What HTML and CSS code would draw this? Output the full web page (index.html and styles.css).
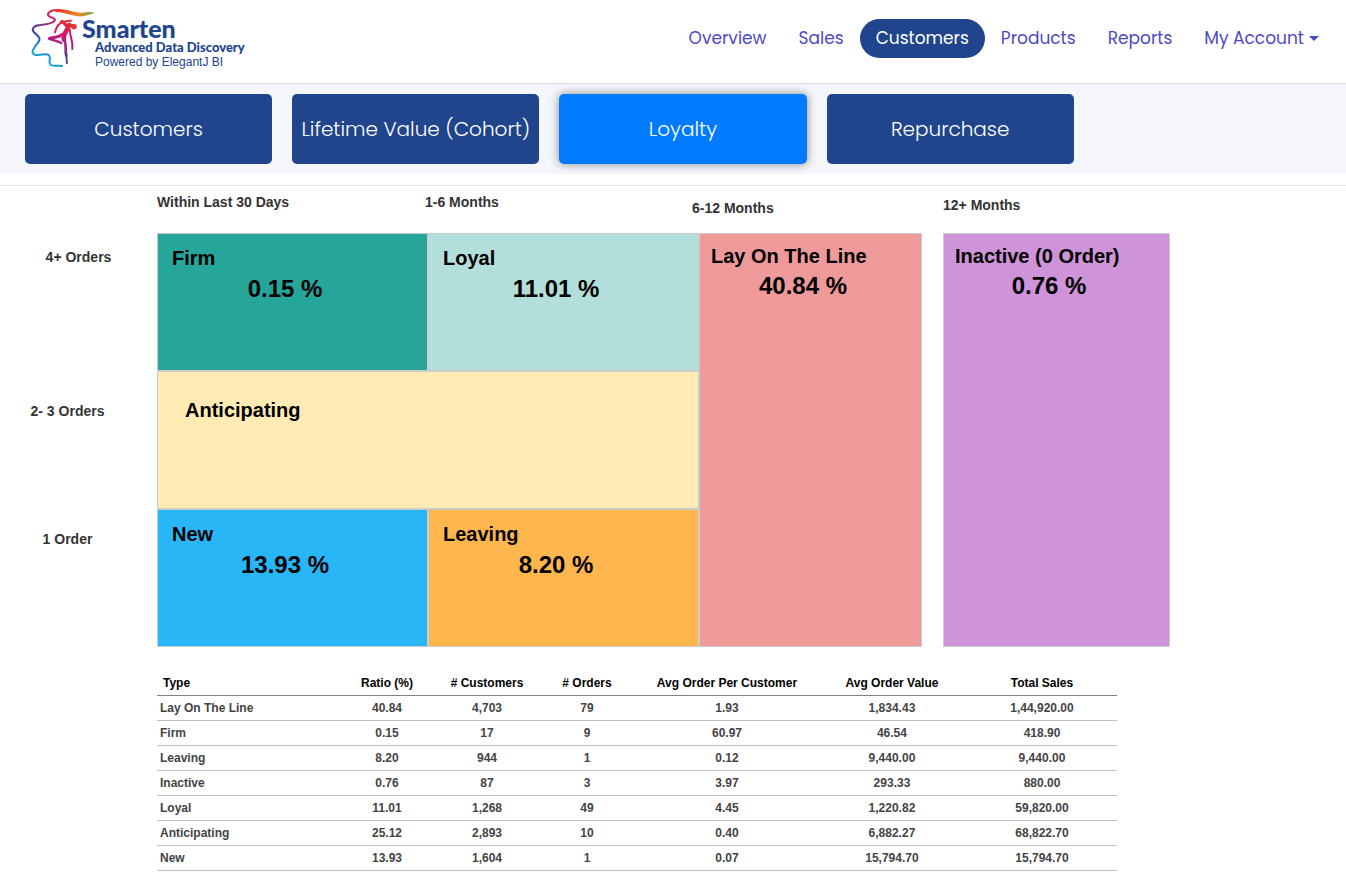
FILE: index.html
```html
<!DOCTYPE html>
<html lang="en">
<head>
<meta charset="utf-8">
<meta name="viewport" content="width=device-width, initial-scale=1">
<title>Smarten - Customer Loyalty</title>
<link rel="stylesheet" href="styles.css">
</head>
<body>
<header class="topbar">
  <a class="brand" href="#">
    <svg class="brand-mark" viewBox="0 0 210 192" aria-hidden="true">
      <defs>
        <linearGradient id="ribbon" gradientUnits="userSpaceOnUse" x1="150" y1="10" x2="60" y2="185">
          <stop offset="0" stop-color="#e5332a"/><stop offset=".28" stop-color="#d81e5b"/><stop offset=".42" stop-color="#8a2a8c"/><stop offset=".6" stop-color="#3b4ba3"/><stop offset=".85" stop-color="#159fdc"/>
        </linearGradient>
        <linearGradient id="tip" gradientUnits="userSpaceOnUse" x1="95" y1="0" x2="212" y2="0">
          <stop offset="0" stop-color="#e5332a"/><stop offset=".55" stop-color="#f08a24"/><stop offset="1" stop-color="#5aab3c"/>
        </linearGradient>
        <linearGradient id="body" gradientUnits="userSpaceOnUse" x1="140" y1="45" x2="112" y2="165">
          <stop offset="0" stop-color="#e8312b"/><stop offset=".4" stop-color="#d6146c"/><stop offset=".75" stop-color="#8b2a8f"/><stop offset="1" stop-color="#33358a"/>
        </linearGradient>
      </defs>
      <path d="M118 18C95 12 74 15 69 27C67 37 84 37 90 43C90 54 70 58 46 60C26 61 18 72 27 82C42 95 49 101 39 113C26 128 16 144 29 149C48 153 62 143 72 151C80 159 67 172 78 180C87 185 97 180 111 183" fill="none" stroke="url(#ribbon)" stroke-width="6" stroke-linecap="round"/>
      <path d="M92 14C122 9 145 24 171 23C185 22 195 19 211 25C196 26 188 32 174 34C144 36 124 21 92 21Z" fill="url(#tip)"/>
      <g fill="none" stroke="url(#body)" stroke-linecap="round" stroke-linejoin="round">
        <path stroke-width="6" d="M90 82C95 62 104 47 138 47"/>
        <path stroke-width="14" d="M133 60C128 74 112 88 117 104"/>
        <path stroke-width="10" d="M110 50C118 50 116 56 126 63L142 62"/>
        <path stroke-width="9" d="M112 88C101 100 90 94 74 100"/>
        <path stroke-width="7" d="M72 101C86 107 98 108 109 114"/>
        <path stroke-width="6" d="M135 76C134 94 145 108 142 132"/>
        <path stroke-width="8" d="M118 104C126 122 119 136 124 152"/>
        <path stroke-width="5" d="M124 152L126 175"/>
      </g>
      <circle cx="147" cy="65" r="8" fill="#e8312b"/>
    </svg>
    <span class="brand-text">
      <span class="brand-name">Smarten</span>
      <span class="brand-line">Advanced Data Discovery</span>
      <span class="brand-sub">Powered by ElegantJ BI</span>
    </span>
  </a>
  <nav class="menu" aria-label="Main">
    <a class="menu-link" href="#">Overview</a>
    <a class="menu-link" href="#">Sales</a>
    <a class="menu-link menu-link-active" href="#" aria-current="page">Customers</a>
    <a class="menu-link" href="#">Products</a>
    <a class="menu-link" href="#">Reports</a>
    <button class="menu-link menu-drop" type="button" aria-haspopup="true">My Account</button>
  </nav>
</header>

<nav class="tabs" aria-label="Customer reports">
  <a class="tab" href="#">Customers</a>
  <a class="tab" href="#">Lifetime Value (Cohort)</a>
  <a class="tab tab-active" href="#" aria-current="page">Loyalty</a>
  <a class="tab" href="#">Repurchase</a>
</nav>

<main class="report">
  <section class="matrix" aria-label="Loyalty matrix">
    <div class="period period-recent">Within Last 30 Days</div>
    <div class="period period-half">1-6 Months</div>
    <div class="period period-year">6-12 Months</div>
    <div class="period period-over">12+ Months</div>

    <div class="orders orders-four">4+ Orders</div>
    <div class="orders orders-two">2- 3 Orders</div>
    <div class="orders orders-one">1 Order</div>

    <article class="cell firm"><h2 class="cell-title">Firm</h2><p class="cell-value">0.15 %</p></article>
    <article class="cell loyal"><h2 class="cell-title">Loyal</h2><p class="cell-value">11.01 %</p></article>
    <article class="cell anticipating"><h2 class="cell-title">Anticipating</h2></article>
    <article class="cell new"><h2 class="cell-title">New</h2><p class="cell-value">13.93 %</p></article>
    <article class="cell leaving"><h2 class="cell-title">Leaving</h2><p class="cell-value">8.20 %</p></article>
    <article class="cell cell-tall line"><h2 class="cell-title">Lay On The Line</h2><p class="cell-value">40.84 %</p></article>
    <article class="cell cell-tall inactive"><h2 class="cell-title">Inactive (0 Order)</h2><p class="cell-value">0.76 %</p></article>
  </section>

  <section class="summary">
    <table class="table">
      <colgroup><col class="col-type"><col class="col-count"><col class="col-count"><col class="col-count"><col class="col-type"><col class="col-money"><col class="col-money"></colgroup>
      <thead>
        <tr><th scope="col">Type</th><th scope="col">Ratio (%)</th><th scope="col"># Customers</th><th scope="col"># Orders</th><th scope="col">Avg Order Per Customer</th><th scope="col">Avg Order Value</th><th scope="col">Total Sales</th></tr>
      </thead>
      <tbody>
        <tr><td>Lay On The Line</td><td>40.84</td><td>4,703</td><td>79</td><td>1.93</td><td>1,834.43</td><td>1,44,920.00</td></tr>
        <tr><td>Firm</td><td>0.15</td><td>17</td><td>9</td><td>60.97</td><td>46.54</td><td>418.90</td></tr>
        <tr><td>Leaving</td><td>8.20</td><td>944</td><td>1</td><td>0.12</td><td>9,440.00</td><td>9,440.00</td></tr>
        <tr><td>Inactive</td><td>0.76</td><td>87</td><td>3</td><td>3.97</td><td>293.33</td><td>880.00</td></tr>
        <tr><td>Loyal</td><td>11.01</td><td>1,268</td><td>49</td><td>4.45</td><td>1,220.82</td><td>59,820.00</td></tr>
        <tr><td>Anticipating</td><td>25.12</td><td>2,893</td><td>10</td><td>0.40</td><td>6,882.27</td><td>68,822.70</td></tr>
        <tr><td>New</td><td>13.93</td><td>1,604</td><td>1</td><td>0.07</td><td>15,794.70</td><td>15,794.70</td></tr>
      </tbody>
    </table>
  </section>
</main>
</body>
</html>
```
FILE: styles.css
```css
* { box-sizing: border-box; }
body {
  margin: 0;
  background: #fff;
  color: #333;
  font-family: "Liberation Sans", Arial, sans-serif;
}
a { text-decoration: none; }

.topbar {
  display: flex;
  justify-content: space-between;
  align-items: flex-start;
  min-height: 84px;
  padding: 5px 11px 0 25px;
  border-bottom: 1px solid #d3dae3;
}
.brand { display: flex; align-items: flex-start; color: #20458c; }
.brand-mark { width: 70px; height: 64px; }
.brand-text { display: flex; flex-direction: column; padding-top: 12px; margin-left: -13px; white-space: nowrap; }
.brand-name { font: 900 25px/23px Lato, "Open Sans", sans-serif; }
.brand-line { padding-left: 13px; font: 900 13px/14px Lato, "Open Sans", sans-serif; }
.brand-sub { padding-left: 13px; font-size: 12px; line-height: 16px; }

.menu { display: flex; padding-top: 14px; }
.menu-link {
  padding: 0 16px;
  border: 0;
  border-radius: 20px;
  background: none;
  color: #4b4ac6;
  font: 400 17px/39px Poppins, Inter, sans-serif;
  white-space: nowrap;
}
.menu-link-active { background: #20458c; color: #fff; }
.menu-drop { display: flex; align-items: center; gap: 5px; cursor: pointer; }
.menu-drop::after {
  content: "";
  border-top: 5px solid #4b4ac6;
  border-left: 5px solid transparent;
  border-right: 5px solid transparent;
}

.tabs {
  display: grid;
  grid-template-columns: repeat(5, minmax(0, 1fr));
  gap: 20px;
  padding: 10px 5px 10px 25px;
  background: #f4f6fb;
}
.tab {
  border-radius: 5px;
  background: #20458c;
  color: #fff;
  font: 300 20px/70px Poppins, Inter, sans-serif;
  text-align: center;
  white-space: nowrap;
}
.tab-active { background: #007bff; box-shadow: 0 0 10px #888; }

.report { margin-top: 11px; border-top: 1px solid #e8e8e8; }
.matrix {
  display: grid;
  grid-template-columns: 157fr 271fr 271fr 223fr 21fr 227fr 176fr;
  grid-template-rows: 47px repeat(3, 138px);
}
.period, .orders { font-size: 14px; font-weight: 700; line-height: 20px; }
.period { grid-row: 1; }
.period-recent { grid-column: 2; padding-top: 6px; }
.period-half { grid-column: 3; padding-top: 6px; margin-left: -3px; }
.period-year { grid-column: 4; padding-top: 12px; margin-left: -7px; }
.period-over { grid-column: 6; padding-top: 9px; }
.orders { grid-column: 1; padding-right: 22px; text-align: center; }
.orders-four { grid-row: 2; padding: 14px 0 0; }
.orders-two { grid-row: 3; padding-top: 30px; }
.orders-one { grid-row: 4; padding-top: 20px; }

.cell { padding: 9px 0 0; border: 1px solid #ccc; color: #000; }
.cell-title { margin: 0; padding-left: 14px; font-size: 20px; line-height: 30px; }
.cell-value { margin: 0 15px 0 0; font-size: 24px; font-weight: 700; line-height: 32px; text-align: center; }
.cell-tall { grid-row: 2 / 5; padding-top: 7px; }
.cell-tall .cell-title { padding-left: 11px; }
.cell-tall .cell-value { line-height: 30px; }
.firm { grid-area: 2 / 2; background: #26a69a; }
.loyal { grid-area: 2 / 3; background: #b2dfdb; }
.anticipating { grid-area: 3 / 2 / 4 / 4; padding-top: 23px; background: #ffebb3; }
.anticipating .cell-title { padding-left: 27px; }
.new { grid-area: 4 / 2; background: #29b6f6; }
.leaving { grid-area: 4 / 3; background: #ffb74d; }
.line { grid-column: 4; background: #ef9a9a; }
.inactive { grid-column: 6; background: #ce93d8; }

.summary { display: grid; grid-template-columns: 157fr 960fr 229fr; padding: 24px 0 16px; }
.table {
  grid-column: 2;
  width: 100%;
  table-layout: fixed;
  border-collapse: collapse;
  font-size: 12px;
  font-weight: 700;
  line-height: 24px;
}
.col-type { width: 18.75%; }
.table .col-count { width: 10.4167%; }
.col-money { width: 15.625%; }
.table th, .table td { padding: 0; text-align: center; white-space: nowrap; }
.table th { border-bottom: 1px solid #808080; color: #000; }
.table td { border-bottom: 1px solid #bfbfbf; color: #444; }
.table th:first-child { padding-left: 6px; text-align: left; }
.table td:first-child { padding-left: 3px; text-align: left; }
```
